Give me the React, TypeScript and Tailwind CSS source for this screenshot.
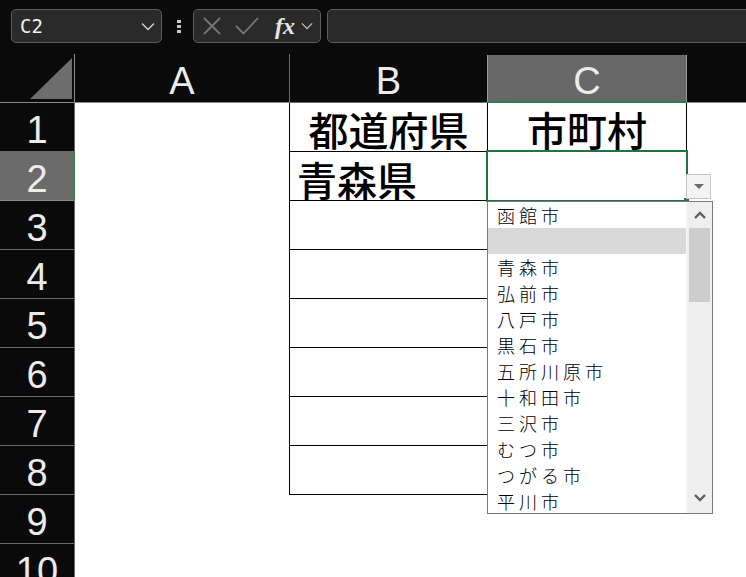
import React from "react";

const CJK = '"Noto Sans CJK JP", "Noto Sans", sans-serif';
const UI = '"Liberation Sans", Arial, sans-serif';

const cities = [
  "函館市",
  "",
  "青森市",
  "弘前市",
  "八戸市",
  "黒石市",
  "五所川原市",
  "十和田市",
  "三沢市",
  "むつ市",
  "つがる市",
  "平川市",
];

function Chevron({ className }: { className?: string }) {
  return (
    <svg viewBox="0 0 14 9" className={className} fill="none">
      <path d="M1 1.5 L7 7.5 L13 1.5" stroke="currentColor" strokeWidth="1.4" />
    </svg>
  );
}

function TopBar() {
  return (
    <div className="flex h-[54px] items-start pl-[11px] pt-[9px]">
      {/* name box */}
      <div className="flex h-[34px] w-[151px] shrink-0 items-center justify-between rounded-[5px] border border-[#5c5c5c] bg-[#2a2a2a] pl-[8px] pr-[6px]">
        <span
          className="text-[19px] leading-none text-[#f2f2f2]"
          style={{ fontFamily: '"DejaVu Sans Mono", "Liberation Mono", monospace', fontWeight: 300 }}
        >
          C2
        </span>
        <Chevron className="h-[9px] w-[14px] text-[#d0d0d0]" />
      </div>
      {/* vertical dots */}
      <div className="ml-[14px] flex h-[34px] w-[5px] shrink-0 flex-col items-center justify-center gap-[2px]">
        <span className="h-[3px] w-[4px] bg-[#c8c8c8]" />
        <span className="h-[3px] w-[4px] bg-[#c8c8c8]" />
        <span className="h-[3px] w-[4px] bg-[#c8c8c8]" />
      </div>
      {/* cancel / enter / function buttons */}
      <div className="ml-[12px] flex h-[34px] w-[128px] shrink-0 items-center rounded-[5px] border border-[#5c5c5c] bg-[#2a2a2a] pl-[9px]">
        <svg viewBox="0 0 18 18" className="h-[18px] w-[18px]" fill="none">
          <path d="M1 1 L17 17 M17 1 L1 17" stroke="#767676" strokeWidth="1.8" />
        </svg>
        <svg viewBox="0 0 24 18" className="ml-[14px] h-[18px] w-[24px]" fill="none">
          <path d="M1 9 L8.5 16.5 L23 1" stroke="#767676" strokeWidth="1.8" />
        </svg>
        <span
          className="ml-[16px] text-[24px] font-bold italic leading-none text-[#e6e6e6]"
          style={{ fontFamily: '"Liberation Serif", "Times New Roman", serif' }}
        >
          fx
        </span>
        <Chevron className="ml-[6px] h-[8px] w-[12px] text-[#c8c8c8]" />
      </div>
      {/* formula input */}
      <div className="ml-[6px] h-[34px] w-[440px] shrink-0 rounded-[5px] border border-[#5c5c5c] bg-[#2a2a2a]" />
    </div>
  );
}

function ColumnHeaders() {
  const letter = "text-[38px] leading-none text-[#ececec] pt-[6px]";
  return (
    <div className="flex h-[49px]" style={{ fontFamily: UI }}>
      <div className="relative w-[75px] shrink-0 border-b border-r border-[#8a8a8a]">
        <svg viewBox="0 0 42 41" className="absolute left-[30px] top-[4px] h-[41px] w-[42px]">
          <polygon points="42,0 42,41 0,41" fill="#6d6d6d" />
        </svg>
      </div>
      <div className={`flex w-[214px] shrink-0 items-center justify-center border-b border-[#8a8a8a] ${letter}`}>A</div>
      <div className={`flex w-[198px] shrink-0 items-center justify-center border-b border-l border-[#6a6a6a] ${letter}`}>
        B
      </div>
      <div className={`mt-[1px] flex w-[200px] shrink-0 items-center justify-center border-x border-b-2 border-x-[#9a9a9a] border-b-[#2e7d52] bg-[#686868] ${letter}`}>
        C
      </div>
      <div className="flex-1 border-b border-[#8a8a8a]" />
    </div>
  );
}

function Row({ n }: { n: number }) {
  const selected = n === 2;
  const tableRow = n <= 8;
  return (
    <div className="flex h-[49px]">
      <div
        className={`flex w-[75px] shrink-0 items-center justify-center border-b border-r pt-[5px] text-[38px] leading-none text-[#ececec] ${
          selected ? "border-b-[#8a8a8a] border-r-[#2e7d52] bg-[#6b6b6b]" : "border-[#6a6a6a] bg-[#0a0a0a]"
        }`}
        style={{ fontFamily: UI }}
      >
        {n}
      </div>
      <div className="w-[214px] shrink-0 bg-white" />
      <div
        className={`flex w-[198px] shrink-0 bg-white ${tableRow ? "border-b border-l border-black" : ""} ${
          n === 1 ? "items-end justify-center pb-[2px]" : "items-end pb-[1px] pl-[7px]"
        }`}
        style={{ fontFamily: CJK }}
      >
        {n === 1 && <span className="text-[40px] font-medium leading-none text-black">都道府県</span>}
        {n === 2 && <span className="text-[40px] font-medium leading-none text-black">青森県</span>}
      </div>
      <div
        className={`flex w-[200px] shrink-0 items-end justify-center bg-white pb-[2px] ${
          tableRow ? "border-b border-x border-black" : ""
        }`}
        style={{ fontFamily: CJK }}
      >
        {n === 1 && <span className="text-[40px] font-medium leading-none text-black">市町村</span>}
      </div>
      <div className="flex-1 bg-white" />
    </div>
  );
}

function DropdownList() {
  return (
    <div className="absolute left-[487px] top-[201px] flex h-[313px] w-[226px] border border-[#7a7a7a] bg-white">
      <div className="flex w-[198px] flex-col">
        {cities.map((c, i) => (
          <div
            key={i}
            className={`flex h-[26px] shrink-0 items-center pl-[9px] text-[18px] font-light leading-none tracking-[4px] text-black ${
              i === 1 ? "bg-[#d9d9d9]" : ""
            }`}
            style={{ fontFamily: CJK }}
          >
            {c}
          </div>
        ))}
      </div>
      {/* scrollbar */}
      <div className="flex w-[26px] flex-col border-l border-[#f7f7f7] bg-[#efefef]">
        <div className="flex h-[26px] items-center justify-center">
          <svg viewBox="0 0 12 8" className="h-[8px] w-[12px]" fill="none">
            <path d="M1 7 L6 2 L11 7" stroke="#5e5e5e" strokeWidth="2.4" />
          </svg>
        </div>
        <div className="mx-[2px] h-[74px] bg-[#cdcdcd]" />
        <div className="flex-1" />
        <div className="flex h-[26px] items-center justify-center pb-[4px]">
          <svg viewBox="0 0 12 8" className="h-[8px] w-[12px]" fill="none">
            <path d="M1 1 L6 6 L11 1" stroke="#5e5e5e" strokeWidth="2.4" />
          </svg>
        </div>
      </div>
    </div>
  );
}

export default function App() {
  return (
    <div className="relative h-[577px] w-[746px] overflow-hidden bg-[#0a0a0a]">
      <TopBar />
      <ColumnHeaders />
      {Array.from({ length: 10 }, (_, i) => (
        <Row key={i} n={i + 1} />
      ))}
      {/* active cell C2 */}
      <div className="absolute left-[486px] top-[150px] h-[52px] w-[202px] border-2 border-[#217346]" />
      <div className="absolute left-[684px] top-[198px] h-[5px] w-[5px] bg-[#217346]" />
      {/* in-cell dropdown button */}
      <div className="absolute left-[686px] top-[174px] flex h-[25px] w-[25px] items-center justify-center border border-[#c6c6c6] bg-[#f4f4f4]">
        <svg viewBox="0 0 10 5" className="h-[5px] w-[10px]">
          <polygon points="0,0 10,0 5,5" fill="#6a6a6a" />
        </svg>
      </div>
      <DropdownList />
    </div>
  );
}
